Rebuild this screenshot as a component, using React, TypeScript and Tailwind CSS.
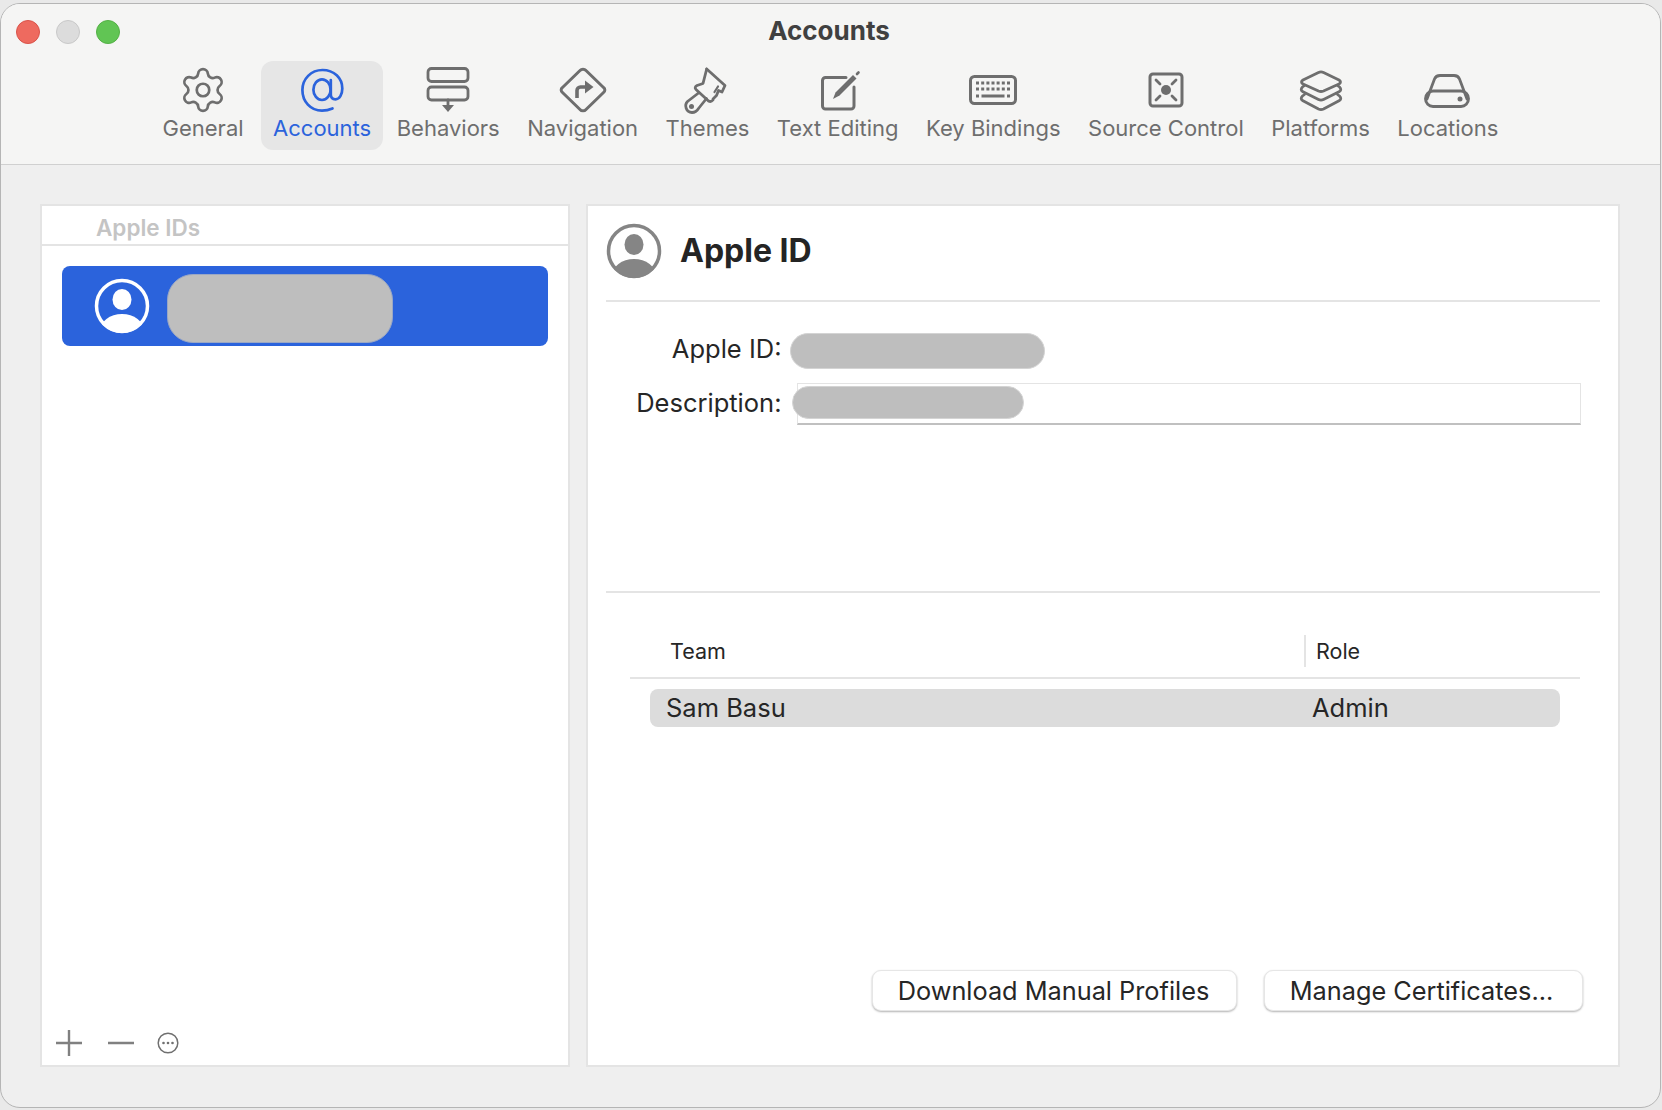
import { Settings } from 'lucide-react';
import type { ReactNode } from 'react';

const gray = '#6e6e6e';

function Icon({ children, w = 48 }: { children: ReactNode; w?: number }) {
  return (
    <svg width={w} height={48} viewBox={`0 0 ${w} 48`} fill="none" stroke={gray} strokeWidth={2.8} strokeLinecap="round" strokeLinejoin="round">
      {children}
    </svg>
  );
}

function AtIcon() {
  return (
    <svg width={48} height={48} viewBox="0 0 48 48" fill="none" stroke="#2b63dc" strokeWidth={2.7} strokeLinecap="round">
      <path d="M34.500 42.500C31 44 27.500 44.700 24 44.700C12.500 44.700 4.400 35.500 4.400 24C4.400 13 13 4 24.500 4C36 4 44.300 12 44.300 22.500C44.300 28.500 41.500 33.300 37.500 33.300C34.500 33.300 32.800 31.500 32.800 28.500V14" />
      <ellipse cx="24" cy="23.700" rx="8.600" ry="10.300" />
    </svg>
  );
}

function BehaviorsIcon() {
  return (
    <Icon>
      <rect x="4" y="2.500" width="40" height="13" rx="3.500" />
      <rect x="4" y="21" width="40" height="13" rx="3.500" />
      <path d="M24 34v6" />
      <path d="M18 39h12l-6 7z" fill={gray} stroke="none" />
    </Icon>
  );
}

function NavigationIcon() {
  return (
    <Icon>
      <path d="M21 4.500a4 4 0 0 1 6 0l17.500 17a3 3 0 0 1 0 5L27 43.500a4 4 0 0 1-6 0L3.500 26.500a3 3 0 0 1 0-5z" strokeWidth={3} />
      <path d="M18 32v-7.500a3.500 3.500 0 0 1 3.500-3.500H27" strokeWidth={3.600} strokeLinecap="butt" />
      <path d="M26 14.500l8.500 6.500-8.500 6.500z" fill={gray} stroke="none" />
    </Icon>
  );
}

function ThemesIcon() {
  return (
    <Icon>
      <path d="M23.700 3L42 19.500L39 26L35.500 24.500L33.500 29.500L30 33" />
      <path d="M23.700 3L20 17.500L14 19.500Q11 21 13 23.500L25.500 35Q28 36.500 30 34" />
      <path d="M35 20.500L31.500 26" strokeWidth={2.200} />
      <path d="M15.500 27L4.500 35.500C1 39 3 46.500 9 46.500C12 46.500 14 45 15.500 42.500L23.500 32.500" />
      <circle cx="8.500" cy="40.500" r="2.500" fill={gray} stroke="none" />
    </Icon>
  );
}

function TextEditingIcon() {
  return (
    <Icon>
      <path d="M32 11.500H11.500a3 3 0 0 0-3 3V40a3 3 0 0 0 3 3H37a3 3 0 0 0 3-3V21" strokeWidth={3} />
      <path d="M19 33L21.500 26.500L39 9L42.500 12.500L25.500 29.500z" fill={gray} stroke="none" />
      <path d="M43 8l1.500-1.500" strokeWidth={2.600} />
    </Icon>
  );
}

function KeyboardIcon() {
  const rows = [17, 23];
  const cols = [9.500, 14.700, 19.900, 25, 30.100, 35.300, 40.500];
  return (
    <Icon w={50}>
      <rect x="2.500" y="10.500" width="45" height="27" rx="4" strokeWidth={3} />
      {rows.map((y) =>
        cols.map((x) => <rect key={`${x}-${y}`} x={x - 1.500} y={y - 1.500} width="3" height="3" fill={gray} stroke="none" />),
      )}
      <rect x="13.500" y="28.500" width="23" height="3" fill={gray} stroke="none" />
      <rect x="8" y="28.500" width="3" height="3" fill={gray} stroke="none" />
      <rect x="39" y="28.500" width="3" height="3" fill={gray} stroke="none" />
    </Icon>
  );
}

function SourceControlIcon() {
  return (
    <Icon>
      <rect x="8" y="8" width="32" height="32" rx="3" strokeWidth={3} />
      <circle cx="24" cy="24" r="5" fill={gray} stroke="none" />
      <path d="M14 14l4 4M34 14l-4 4M14 34l4-4M34 34l-4-4" />
    </Icon>
  );
}

function PlatformsIcon() {
  return (
    <Icon>
      <path d="M21.500 6.500Q24 5.300 26.500 6.500L42 14Q45 16 42 18L26.500 25Q24 26 21.500 25L6 18Q3 16 6 14z" />
      <path d="M7.500 19.500L5.500 21Q3 23.500 5.500 25.500L21.500 33.500Q24 34.700 26.500 33.500L42.500 25.500Q45 23.500 42.500 21L40.500 19.500" />
      <path d="M7.500 28.500L5.500 30Q3 32.500 5.500 34.500L21.500 43Q24 44.200 26.500 43L42.500 34.500Q45 32.500 42.500 30L40.500 28.500" />
    </Icon>
  );
}

function LocationsIcon() {
  return (
    <Icon>
      <path d="M3 33L10.500 13C11.500 10.500 13.500 9.500 16 9.500H30C32.500 9.500 34.500 10.500 35.500 13L43 33" />
      <rect x="1.500" y="25" width="43" height="15.500" rx="7.500" />
      <circle cx="36" cy="33" r="2.500" fill={gray} stroke="none" />
    </Icon>
  );
}

function Avatar({ color, size, id }: { color: string; size: number; id: string }) {
  return (
    <svg width={size} height={size} viewBox="0 0 56 56" className="shrink-0">
      <defs>
        <clipPath id={id}>
          <circle cx="28" cy="28" r="27" />
        </clipPath>
      </defs>
      <circle cx="28" cy="28" r="25.500" fill="none" stroke={color} strokeWidth="3.500" />
      <ellipse cx="28" cy="21.500" rx="9.500" ry="10.500" fill={color} />
      <ellipse cx="28" cy="53" rx="22" ry="17" fill={color} clipPath={`url(#${id})`} />
    </svg>
  );
}

function ToolbarItem({ label, icon, active }: { label: string; icon: ReactNode; active?: boolean }) {
  return (
    <div className={`flex h-[89px] flex-col items-center rounded-[12px] px-3 pt-[5px] ${active ? 'ml-[2px] -mr-[2px] bg-[#e6e6e6]' : ''}`}>
      <div className="flex h-[48px] items-center justify-center">{icon}</div>
      <span className={`mt-[1px] text-[22px] leading-[27px] whitespace-nowrap ${active ? 'text-[#2b63dc]' : 'text-[#6e6e6e]'}`}>{label}</span>
    </div>
  );
}

function MacButton({ children, width }: { children: ReactNode; width: string }) {
  return (
    <button className={`${width} h-[41px] rounded-[9px] border border-[#e6e6e6] bg-white text-[25.300px] leading-none text-[#262626] shadow-[0_1px_2px_rgba(0,0,0,0.3)]`}>
      {children}
    </button>
  );
}

export default function App() {
  return (
    <div className="h-[1110px] w-[1662px] bg-[#e9e9e9] pt-[3px] font-['Inter',sans-serif]">
      <div className="flex h-[1105px] w-[1661px] flex-col overflow-hidden rounded-[20px] border border-[#b5b5b5] bg-[#efefef]">
        {/* Title bar and toolbar */}
        <div className="relative h-[161px] shrink-0 border-b border-[#d0d0d0] bg-[#f5f5f4]">
          <div className="absolute top-[16px] left-[15px] flex gap-[16px]">
            <div className="h-[24px] w-[24px] rounded-full border border-[#d9534a] bg-[#ee6a5f]" />
            <div className="h-[24px] w-[24px] rounded-full border border-[#c8c8c8] bg-[#dcdcdc]" />
            <div className="h-[24px] w-[24px] rounded-full border border-[#54b046] bg-[#61c554]" />
          </div>
          <div className="pt-[10px] pr-[3px] text-center text-[26px] leading-[34px] font-bold text-[#404040]">Accounts</div>
          <div className="mt-[13px] flex justify-center gap-[3.500px]">
            <ToolbarItem label="General" icon={<Settings size={50} strokeWidth={1.300} color={gray} />} />
            <ToolbarItem label="Accounts" active icon={<AtIcon />} />
            <ToolbarItem label="Behaviors" icon={<BehaviorsIcon />} />
            <ToolbarItem label="Navigation" icon={<NavigationIcon />} />
            <ToolbarItem label="Themes" icon={<ThemesIcon />} />
            <ToolbarItem label="Text Editing" icon={<TextEditingIcon />} />
            <ToolbarItem label="Key Bindings" icon={<KeyboardIcon />} />
            <ToolbarItem label="Source Control" icon={<SourceControlIcon />} />
            <ToolbarItem label="Platforms" icon={<PlatformsIcon />} />
            <ToolbarItem label="Locations" icon={<LocationsIcon />} />
          </div>
        </div>

        {/* Panels */}
        <div className="flex gap-[16px] pt-[39px] pl-[39px]">
          {/* Apple IDs list */}
          <div className="flex h-[863px] w-[530px] flex-col border-2 border-[#e4e4e4] bg-white">
            <div className="h-[40px] border-b-2 border-[#e4e4e4] pt-[8px] pl-[54px] text-[22.500px] leading-[28px] font-semibold text-[#c4c4c4]">Apple IDs</div>
            <div className="px-[20px] pt-[20px]">
              <div className="flex h-[80px] items-center rounded-[8px] bg-[#2b63dc] pl-[32px]">
                <Avatar color="#ffffff" size={56} id="avatar-white" />
                <div className="mt-[4px] ml-[17px] h-[69px] w-[226px] rounded-[26px] border border-[#9aa7c4] bg-[#bebebe]" />
              </div>
            </div>
            <div className="mt-auto flex h-[44px] items-center pl-[13px]">
              <svg width="28" height="28" viewBox="0 0 28 28" stroke="#808080" strokeWidth="2.400">
                <path d="M14 1v26M1 14h26" />
              </svg>
              <svg className="ml-[24px]" width="28" height="28" viewBox="0 0 28 28" stroke="#808080" strokeWidth="2.400">
                <path d="M1 14h26" />
              </svg>
              <svg className="ml-[22px]" width="22" height="22" viewBox="0 0 22 22">
                <circle cx="11" cy="11" r="9.800" fill="none" stroke="#707070" strokeWidth="1.500" />
                <circle cx="6.500" cy="11" r="1.300" fill="#707070" />
                <circle cx="11" cy="11" r="1.300" fill="#707070" />
                <circle cx="15.500" cy="11" r="1.300" fill="#707070" />
              </svg>
            </div>
          </div>

          {/* Apple ID details */}
          <div className="flex h-[863px] w-[1034px] flex-col border-2 border-[#e4e4e4] bg-white pr-[18px] pl-[18px]">
            <div className="flex h-[96px] shrink-0 items-center border-b-2 border-[#e4e4e4] pb-[4px]">
              <Avatar color="#858585" size={56} id="avatar-gray" />
              <span className="ml-[18px] text-[32px] font-bold text-[#242424]">Apple ID</span>
            </div>

            <div className="h-[291px] shrink-0 border-b-2 border-[#e4e4e4] pt-[31px]">
              <div className="flex h-[36px] items-center">
                <span className="w-[175.500px] pb-[4px] text-right text-[25.500px] text-[#262626]">Apple ID:</span>
                <div className="ml-[8px] h-[36px] w-[255px] rounded-full border border-[#d4d4d4] bg-[#bebebe]" />
              </div>
              <div className="mt-[14px] flex h-[42px] items-center">
                <span className="w-[175.500px] pb-[2px] text-right text-[25.500px] text-[#262626]">Description:</span>
                <div className="ml-[15px] flex h-[42px] w-[784px] items-center border border-b-2 border-[#e4e4e4] border-b-[#c0c0c0]">
                  <div className="-ml-[6px] mb-[2px] h-[33px] w-[232px] rounded-full border border-[#d4d4d4] bg-[#bebebe]" />
                </div>
              </div>
            </div>

            <div className="ml-[24px] w-[950px] pt-[43px]">
              <div className="flex h-[43px] items-center border-b-2 border-[#e4e4e4] pb-[11px]">
                <span className="w-[674px] pl-[40px] text-[21.500px] text-[#262626]">Team</span>
                <span className="h-[32px] border-l-2 border-[#e4e4e4] pl-[10px] text-[21.500px] leading-[32px] text-[#262626]">Role</span>
              </div>
              <div className="mx-[20px] mt-[10px] flex h-[38px] items-center rounded-[8px] bg-[#dcdcdc] text-[25.500px] text-[#262626]">
                <span className="w-[662px] pl-[16px]">Sam Basu</span>
                <span>Admin</span>
              </div>
            </div>

            <div className="mt-auto mb-[54px] flex justify-end gap-[27px] pr-[17px]">
              <MacButton width="w-[365px] pr-[2px]">Download Manual Profiles</MacButton>
              <MacButton width="w-[319px] pr-[4px]">Manage Certificates...</MacButton>
            </div>
          </div>
        </div>
      </div>
    </div>
  );
}
